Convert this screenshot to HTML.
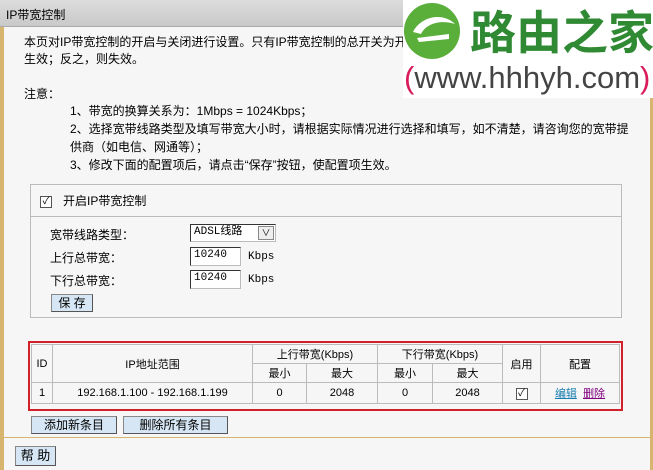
<!DOCTYPE html>
<html><head><meta charset="utf-8">
<style>
*{margin:0;padding:0;box-sizing:border-box}
body{width:653px;height:470px;background:#f6f6f6;position:relative;overflow:hidden;font-family:"Liberation Sans","Noto Sans CJK SC","WenQuanYi Zen Hei",sans-serif;font-size:12px;color:#000}
.a{position:absolute;white-space:nowrap}
.btn{position:absolute;background:#d6e6f4;border:1px solid #555;border-top-color:#888;border-left-color:#888;text-align:center;font-size:12px;line-height:16px}
.inp{position:absolute;background:#fff;border:1px solid #333;border-right-color:#bbb;border-bottom-color:#bbb;font-size:11px;padding-left:3px;line-height:15px;font-family:"Liberation Mono","Noto Sans CJK SC",monospace}
table{border-collapse:collapse;position:absolute;left:31px;top:344px;width:589px}
td{border:1px solid #bbb;text-align:center;font-size:11px;padding:0;background:#f6f6f6}
.cb{display:inline-block;width:12px;height:12px;border:1px solid #555;background:#fff;font-size:10px;line-height:10px;text-align:center}
</style></head><body>
<div class="a" style="left:0;top:0;width:4px;height:470px;background:#d8b56e"></div>
<div class="a" style="right:0;top:0;width:3px;height:470px;background:#d8b56e"></div>
<div class="a" style="left:0;top:0;width:653px;height:27px;background:linear-gradient(#dcdcdc,#c9c9c9);border-bottom:1px solid #aaa"></div>
<div class="a" style="left:6px;top:6px;font-size:12px">IP带宽控制</div>
<div class="a" style="left:24px;top:34px;line-height:17px">本页对IP带宽控制的开启与关闭进行设置。只有IP带宽控制的总开关为开启时，带宽控制规则才能够<br>生效；反之，则失效。</div>
<div class="a" style="left:24px;top:85px">注意：</div>
<div class="a" style="left:70px;top:102px;line-height:18px">1、带宽的换算关系为：1Mbps = 1024Kbps；<br>2、选择宽带线路类型及填写带宽大小时，请根据实际情况进行选择和填写，如不清楚，请咨询您的宽带提<br>供商（如电信、网通等）；<br>3、修改下面的配置项后，请点击“保存”按钮，使配置项生效。</div>

<div class="a" style="left:30px;top:184px;width:592px;height:134px;border:1px solid #bbb"></div>
<div class="a" style="left:31px;top:216px;width:590px;height:1px;background:#bbb"></div>
<div class="a" style="left:40px;top:193px"><span class="cb">✓</span></div>
<div class="a" style="left:63px;top:192px">开启IP带宽控制</div>
<div class="a" style="left:50px;top:226px">宽带线路类型：</div>
<div class="inp" style="left:190px;top:224px;width:86px;height:18px;font-size:11px">ADSL线路</div>
<div class="a" style="left:258px;top:226px;width:16px;height:14px;border:1px solid #888;background:#eee;font-size:9px;text-align:center;line-height:12px">∨</div>
<div class="a" style="left:50px;top:249px">上行总带宽：</div>
<div class="inp" style="left:190px;top:247px;width:51px;height:19px">10240</div>
<div class="a" style="left:248px;top:251px;font-size:11px;font-family:'Liberation Mono',monospace">Kbps</div>
<div class="a" style="left:50px;top:272px">下行总带宽：</div>
<div class="inp" style="left:190px;top:270px;width:51px;height:19px">10240</div>
<div class="a" style="left:248px;top:274px;font-size:11px;font-family:'Liberation Mono',monospace">Kbps</div>
<div class="btn" style="left:51px;top:294px;width:42px;height:18px">保 存</div>

<div class="a" style="left:28px;top:341px;width:595px;height:70px;border:2px solid #d0202a"></div>
<table>
<tr style="height:19px"><td rowspan="2" style="width:21px">ID</td><td rowspan="2" style="width:200px">IP地址范围</td><td colspan="2">上行带宽(Kbps)</td><td colspan="2">下行带宽(Kbps)</td><td rowspan="2" style="width:38px">启用</td><td rowspan="2">配置</td></tr>
<tr style="height:19px"><td style="width:54px">最小</td><td style="width:71px">最大</td><td style="width:55px">最小</td><td style="width:70px">最大</td></tr>
<tr style="height:21px"><td>1</td><td>192.168.1.100 - 192.168.1.199</td><td>0</td><td>2048</td><td>0</td><td>2048</td><td><span class="cb">✓</span></td><td><span style="color:#1a7fb0;text-decoration:underline">编辑</span>&nbsp;&nbsp;<span style="color:#800080;text-decoration:underline">删除</span></td></tr>
</table>
<div class="btn" style="left:31px;top:416px;width:86px;height:18px">添加新条目</div>
<div class="btn" style="left:123px;top:416px;width:105px;height:18px">删除所有条目</div>
<div class="a" style="left:0;top:437px;width:653px;height:1px;background:#d8b56e"></div>
<div class="btn" style="left:15px;top:446px;width:41px;height:20px;line-height:18px;font-size:13px">帮 助</div>

<div class="a" style="left:403px;top:0;width:250px;height:98px;background:#fff"></div>
<svg class="a" style="left:403px;top:2px" width="60" height="60" viewBox="0 0 60 60">
<circle cx="29" cy="29" r="28" fill="#5aae3a"/>
<path d="M10 30 C18 14 40 10 52 22 C40 18 24 20 18 32 Z" fill="#fff"/>
<path d="M14 36 L46 32 L46 37 L16 40 Z" fill="#fff"/>
</svg>
<div class="a" style="left:470px;top:2px;font-size:46px;line-height:56px;color:#2f8a33;font-family:'Noto Sans CJK SC',sans-serif;font-weight:bold">路由之家</div>
<div class="a" style="left:404px;top:58px;font-size:31px;line-height:40px;color:#444"><span style="color:#d81b5a">(</span>www.hhhyh.com<span style="color:#d81b5a">)</span></div>
</body></html>
